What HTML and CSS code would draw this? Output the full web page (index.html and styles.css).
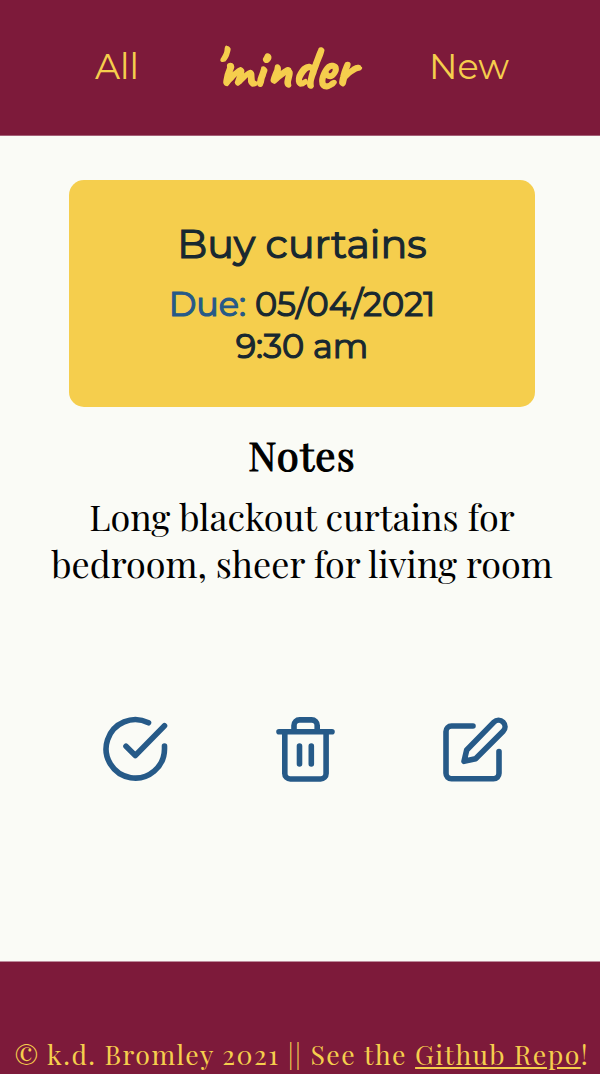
FILE: index.html
```
<!DOCTYPE html>
<html lang="en">
<head>
<meta charset="utf-8">
<title>'minder</title>
<link rel="stylesheet" href="styles.css">
</head>
<body>
<header class="header">
  <a class="nav-link">All</a>
  <h1 class="logo">'minder</h1>
  <a class="nav-link">New</a>
</header>
<main class="main">
  <section class="card">
    <h2 class="card-title">Buy curtains</h2>
    <p class="card-due"><span class="due-label">Due:</span> 05/04/2021<br>9:30 am</p>
  </section>
  <h3 class="notes-title">Notes</h3>
  <p class="notes">Long blackout curtains for bedroom, sheer for living room</p>
  <div class="actions">
    <svg class="icon" viewBox="100 714 70 70"><path d="M164.5 746v3a29.2 29.2 0 1 1-16-26.2M126 746.3l9.3 9.2 29.2-29.7"/></svg>
    <svg class="icon" viewBox="270 714 70 70"><path d="M279 731.7h53M294 731v-5.500a5.600 5.600 0 0 1 5.600-5.600h12a5.600 5.600 0 0 1 5.600 5.600v5.500M284.800 732v41.500a5.500 5.500 0 0 0 5.500 5.500h30.300a5.500 5.500 0 0 0 5.500-5.500V732M299.500 746v18M311.300 746v18"/></svg>
    <svg class="icon" viewBox="440 714 70 70"><path d="M473 726h-21.500a5.500 5.500 0 0 0-5.500 5.500v41.800a5.500 5.500 0 0 0 5.500 5.500h42a5.500 5.500 0 0 0 5.500-5.500v-21.800M464 761.300l2.700-11.300 27.200-27.900a6.500 6.500 0 0 1 9.200 9.200L475.600 758.700Z"/></svg>
  </div>
</main>
<footer class="footer">
  <p class="credit">© k.d. Bromley 2021 || See the <a class="repo">Github Repo</a>!</p>
</footer>
</body>
</html>
```
FILE: styles.css
```
* { box-sizing: border-box; }
body {
  margin: 0;
  height: 1074px;
  display: flex;
  flex-direction: column;
  overflow: hidden;
  background: #fafbf6;
  color: #000;
  font-family: "Playfair Display", "Liberation Serif", serif;
}
h1, h2, h3, p { margin: 0; font-weight: 400; }
.header {
  height: 136px;
  padding: 0 91px 3px 95px;
  display: flex;
  align-items: center;
  background: #7d1a3a;
  border-bottom: 1px solid #a45f76;
  color: #f5ce4d;
}
.nav-link { font: 400 35px/43px Montserrat, Lato, sans-serif; }
.logo {
  margin: 3px auto 0 73px;
  font: 700 59px/76px Caveat, cursive;
  -webkit-text-stroke: 1.5px;
}
.main {
  flex: 1;
  display: flex;
  flex-direction: column;
  align-items: center;
  padding: 44px 2px 0 6px;
}
.card {
  width: 466px;
  height: 226.5px;
  padding-top: 40px;
  border-radius: 15px;
  background: #f5ce4d;
  color: #182830;
  font-family: Montserrat, Lato, sans-serif;
  text-align: center;
  -webkit-text-stroke: 1.2px;
}
.card-title { font-size: 39.7px; line-height: 49px; }
.card-due { margin-top: 14px; font-size: 33.5px; line-height: 42px; }
.due-label { color: #265a88; }
.notes-title {
  margin-top: 21.5px;
  font-size: 40px;
  line-height: 53px;
  letter-spacing: 1.2px;
  -webkit-text-stroke: 1.2px;
}
.notes {
  width: 520px;
  margin-top: 12px;
  font-size: 36px;
  line-height: 47px;
  text-align: center;
}
.actions {
  width: 410px;
  margin: 127px 0 0 6px;
  display: flex;
  justify-content: space-between;
}
.icon {
  width: 70px;
  height: 70px;
  fill: none;
  stroke: #265a88;
  stroke-width: 5.6;
  stroke-linecap: round;
  stroke-linejoin: round;
}
.footer {
  height: 113px;
  padding-top: 74px;
  background: #7d1a3a;
  border-top: 1px solid #bd8c9c;
  color: #f5ce4d;
}
.credit {
  padding-left: 14.5px;
  font-size: 26.67px;
  line-height: 36px;
  letter-spacing: 1.46px;
  white-space: nowrap;
}
.repo { text-decoration: underline; }
```
